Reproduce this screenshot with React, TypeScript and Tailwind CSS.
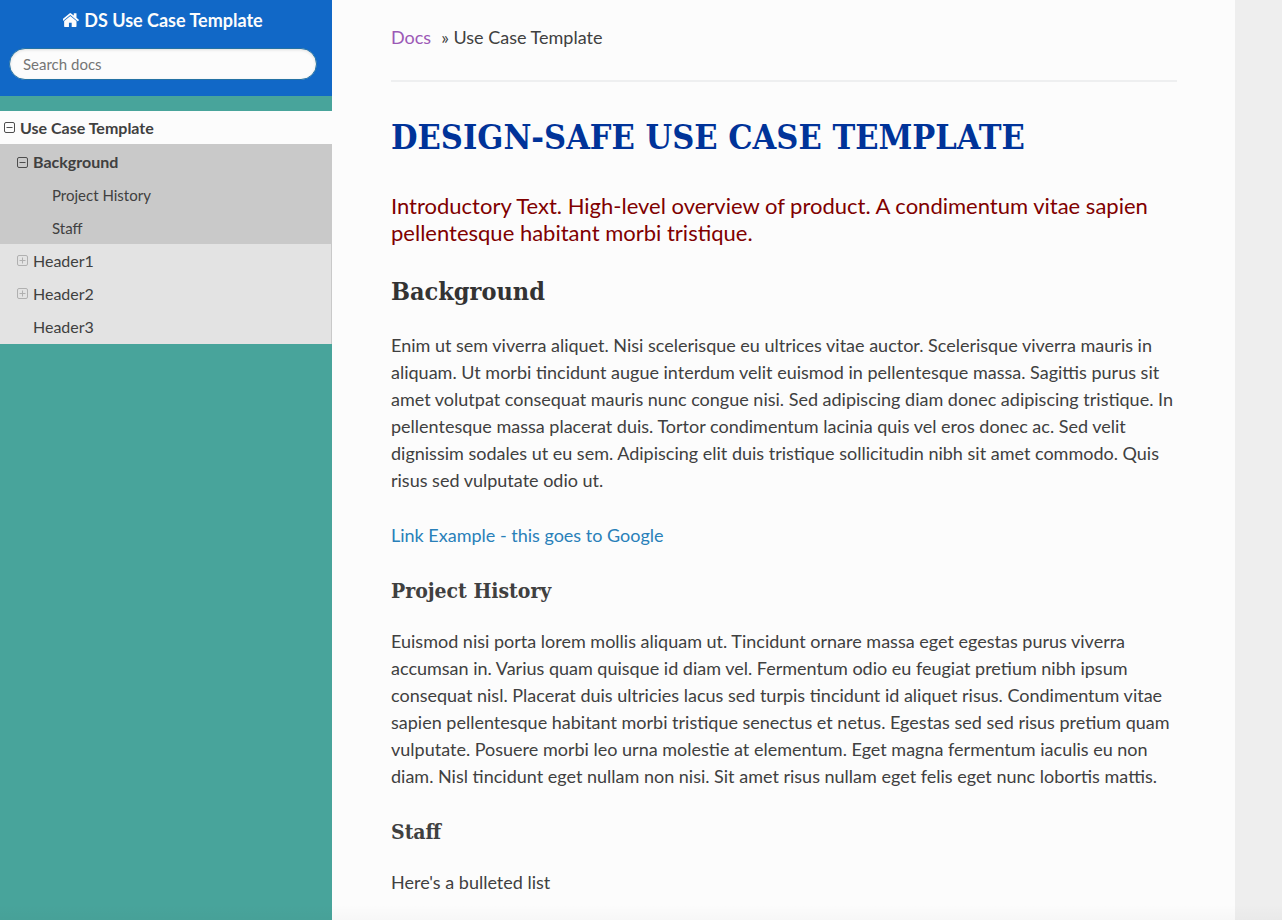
import type { ReactNode } from 'react';

function HomeIcon() {
  return (
    <svg viewBox="150 253 1492 1283" className="h-[14px] w-4" fill="currentColor" aria-hidden="true">
      <path d="M1408 992v480q0 26-19 45t-45 19h-384v-384h-256v384h-384q-26 0-45-19t-19-45v-480q0-1 .5-3t.5-3l575-474 575 474q1 2 1 6zm223-69l-62 74q-8 9-21 11h-3q-13 0-21-7l-692-577-692 577q-12 8-24 7-13-2-21-11l-62-74q-8-10-7-23.5t11-21.5l719-599q32-26 76-26t76 26l244 204v-195q0-14 9-23t23-9h192q14 0 23 9t9 23v408l219 182q10 8 11 21.5t-7 23.5z" />
    </svg>
  );
}

function ToggleIcon({ open }: { open: boolean }) {
  return (
    <svg viewBox="0 0 11 11" className="size-[11px]" fill="none" stroke="currentColor" aria-hidden="true">
      <rect x="0.5" y="0.5" width="10" height="10" rx="1.5" />
      <path d={open ? 'M2.5 5.5h6' : 'M2.5 5.5h6M5.5 2.5v6'} />
    </svg>
  );
}

function NavToggle({ open, label }: { open: boolean; label: string }) {
  return (
    <button type="button" aria-label={label} aria-expanded={open} className={open ? 'text-[#4d4d4d]' : 'text-[#b0b0b0]'}>
      <ToggleIcon open={open} />
    </button>
  );
}

function SectionTitle({ children }: { children: ReactNode }) {
  return (
    <h3 className="mb-[23px] font-['Roboto_Slab','DejaVu_Serif_Condensed','DejaVu_Serif',serif] text-[21px] leading-7 font-bold">
      {children}
    </h3>
  );
}

function Sidebar() {
  return (
    <nav className="w-[332px] shrink-0 bg-[#48a49b]" aria-label="Main">
      <div className="flex h-24 flex-col items-center bg-[#1168c7] pt-[6px] pr-[15px] pl-[9px]">
        <a href="#" className="flex items-center gap-[5px] text-lg leading-7 font-bold text-[#fcfcfc]">
          <HomeIcon />
          DS Use Case Template
        </a>
        <input
          type="text"
          aria-label="Search docs"
          placeholder="Search docs"
          className="mt-[14px] h-8 w-full rounded-full border border-[#2472a4] bg-[#fcfcfc] px-[13px] text-[15px] shadow-[inset_0_1px_3px_#dddddd] outline-none placeholder:text-[#757575]"
        />
      </div>
      <ul className="mt-[15px] text-[#404040]">
        <li>
          <div className="flex h-[34px] items-center gap-[5px] border-b border-[#c9c9c9] bg-[#fcfcfc] pl-1 text-base font-bold">
            <NavToggle open label="Toggle Use Case Template" />
            <a href="#use-case">Use Case Template</a>
          </div>
          <ul className="bg-[#e3e3e3] text-base">
            <li className="bg-[#c9c9c9]">
              <div className="flex h-[34px] items-center gap-[5px] pl-[17px] font-bold">
                <NavToggle open label="Toggle Background" />
                <a href="#background">Background</a>
              </div>
              <ul className="text-[15px]">
                <li className="flex h-[33px] items-center pl-[52px]">
                  <a href="#project-history">Project History</a>
                </li>
                <li className="flex h-8 items-center pl-[52px]">
                  <a href="#staff">Staff</a>
                </li>
              </ul>
            </li>
            {['Header1', 'Header2'].map((name) => (
              <li key={name} className="flex h-[33px] items-center gap-[5px] border-r border-[#c9c9c9] pl-[17px]">
                <NavToggle open={false} label={`Toggle ${name}`} />
                <a href="#header">{name}</a>
              </li>
            ))}
            <li className="flex h-[34px] items-center border-r border-[#c9c9c9] pl-[33px]">
              <a href="#header3">Header3</a>
            </li>
          </ul>
        </li>
      </ul>
    </nav>
  );
}

export default function App() {
  return (
    <div className="relative flex h-screen overflow-hidden bg-[#eeeeee] font-['Lato',sans-serif] text-[#404040]">
      <Sidebar />
      <main className="max-w-[903px] min-w-0 flex-1 overflow-hidden bg-[#fcfcfc] pt-6 pr-[58px] pl-[59px] text-lg leading-[27px]">
        <nav aria-label="Breadcrumb" className="flex gap-[10px]">
          <a href="#docs" className="text-[#9b59b6]">Docs</a>
          <span>» Use Case Template</span>
        </nav>
        <hr className="mt-[29px] mb-[30px] border-t-2 border-[#eeeff0]" />
        <h1 className="mb-[30px] font-['Roboto_Slab','DejaVu_Serif_Condensed','DejaVu_Serif',serif] text-[34px] leading-[50px] font-bold whitespace-nowrap text-[#003399]">
          DESIGN-SAFE USE CASE TEMPLATE
        </h1>
        <p className="mb-[30px] text-[22px] text-[#800000]">
          Introductory Text. High-level overview of product. A condimentum vitae sapien pellentesque habitant morbi
          tristique.
        </p>
        <h2 id="background" className="mb-6 font-['Roboto_Slab','DejaVu_Serif_Condensed','DejaVu_Serif',serif] text-[25px] leading-8 font-bold text-[#333333]">
          Background
        </h2>
        <p className="mb-7">
          Enim ut sem viverra aliquet. Nisi scelerisque eu ultrices vitae auctor. Scelerisque viverra mauris in aliquam.
          Ut morbi tincidunt augue interdum velit euismod in pellentesque massa. Sagittis purus sit amet volutpat
          consequat mauris nunc congue nisi. Sed adipiscing diam donec adipiscing tristique. In pellentesque massa
          placerat duis. Tortor condimentum lacinia quis vel eros donec ac. Sed velit dignissim sodales ut eu sem.
          Adipiscing elit duis tristique sollicitudin nibh sit amet commodo. Quis risus sed vulputate odio ut.
        </p>
        <p className="mb-7">
          <a href="https://www.google.com" className="text-[#2980b9]">Link Example - this goes to Google</a>
        </p>
        <SectionTitle>Project History</SectionTitle>
        <p className="mb-7">
          Euismod nisi porta lorem mollis aliquam ut. Tincidunt ornare massa eget egestas purus viverra accumsan in.
          Varius quam quisque id diam vel. Fermentum odio eu feugiat pretium nibh ipsum consequat nisl. Placerat duis
          ultricies lacus sed turpis tincidunt id aliquet risus. Condimentum vitae sapien pellentesque habitant morbi
          tristique senectus et netus. Egestas sed sed risus pretium quam vulputate. Posuere morbi leo urna molestie at
          elementum. Eget magna fermentum iaculis eu non diam. Nisl tincidunt eget nullam non nisi. Sit amet risus
          nullam eget felis eget nunc lobortis mattis.
        </p>
        <SectionTitle>Staff</SectionTitle>
        <p>Here's a bulleted list</p>
      </main>
      <div className="pointer-events-none absolute inset-x-0 bottom-0 h-4 bg-linear-to-b from-transparent to-black/2" />
    </div>
  );
}
